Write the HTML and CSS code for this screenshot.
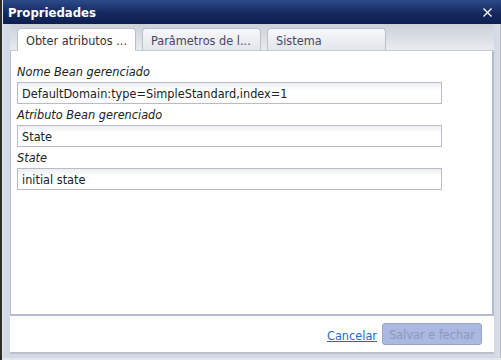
FILE: index.html
```html
<!DOCTYPE html>
<html lang="pt">
<head>
  <meta charset="UTF-8" />
  <title>Propriedades</title>
  <link rel="stylesheet" href="styles.css">
</head>
<body>
  <div class="screen">
    <div class="dialog">

      <!-- Title bar -->
      <div class="titlebar">
        <span class="title">Propriedades</span>
        <svg class="close" width="9" height="9" viewBox="0 0 9 9">
          <path d="M0.5 0.5 L8.5 8.5 M8.5 0.5 L0.5 8.5" stroke="#fff" stroke-width="1.3" fill="none"/>
        </svg>
      </div>

      <div class="frame">
        <div class="window">

          <!-- Tabs -->
          <div class="tabbar">
            <div class="tab active">Obter atributos ...</div>
            <div class="tab">Parâmetros de l...</div>
            <div class="tab">Sistema</div>
          </div>

          <!-- Tab content -->
          <div class="panel">
            <div class="field-label">Nome Bean gerenciado</div>
            <div class="field">DefaultDomain:type=SimpleStandard,index=1</div>
            <div class="field-label">Atributo Bean gerenciado</div>
            <div class="field">State</div>
            <div class="field-label">State</div>
            <div class="field">initial state</div>
          </div>

          <!-- Buttons -->
          <div class="footer">
            <a href="#" class="cancel">Cancelar</a>
            <button class="save" disabled>Salvar e fechar</button>
          </div>

        </div>
      </div>
    </div>
  </div>
</body>
</html>
```

FILE: styles.css
```css
body {
  margin: 0;
  padding: 0;
  background-color: #eceef1;
  font-family: "DejaVu Sans Condensed", "DejaVu Sans", Verdana, sans-serif;
  font-size: 12.6px;
  color: #222;
}
.screen {
  width: 499px;
  height: 360px;
  border-left: 2px solid #2c2c2c;
  background-color: #e3e6ea;
  overflow: hidden;
}
.dialog {
  margin-left: 1px;
  width: 498px;
}
.titlebar {
  height: 24px;
  display: flex;
  align-items: center;
  justify-content: space-between;
  padding: 0 9px 0 5px;
  background: linear-gradient(#2c4a8a, #14295e 55%, #0d1f52);
}
.title {
  color: #fff;
  font-weight: bold;
  font-size: 13px;
  margin-top: 1px;
}
.close {
  display: block;
}
.frame {
  width: 484px;
  padding: 0 3px 4px 7px;
  background-color: #d3dae5;
  border-right: 3px solid #d9dee6;
  box-shadow: 1px 0 0 #b3b9c3;
}
.window {
  background-color: #fff;
  border-bottom: 2px solid #bcc2cb;
}
.tabbar {
  height: 27px;
  display: flex;
  align-items: flex-end;
  gap: 6px;
  padding-left: 7px;
  background: linear-gradient(#cbd0d9, #e9ebef);
  border-bottom: 1px solid #c4cad6;
  box-sizing: border-box;
}
.tab {
  width: 119px;
  height: 22px;
  box-sizing: border-box;
  padding: 4px 0 0 8px;
  border: 1px solid #b9bfcb;
  border-bottom: none;
  border-radius: 4px 4px 0 0;
  background: linear-gradient(#f7f8fa, #e3e6ec);
  color: #4a4660;
  white-space: nowrap;
  overflow: hidden;
}
.tab.active {
  height: 23px;
  margin-bottom: -1px;
  background: #fff;
  color: #333;
}
.panel {
  height: 253px;
  padding: 10px 0 0 6px;
  border-left: 1px solid #b5bdca;
  border-right: 2px solid #b5bdca;
  border-bottom: 2px solid #b5bdca;
}
.field-label {
  height: 21px;
  line-height: 21px;
  font-style: italic;
  color: #222;
}
.field {
  width: 419px;
  height: 18px;
  padding: 2px 0 0 4px;
  line-height: 18px;
  border: 1px solid #b7bbcd;
  background: linear-gradient(#eceef1, #fff 7px);
  color: #222;
}
.footer {
  height: 36px;
  display: flex;
  justify-content: flex-end;
  align-items: flex-start;
  gap: 5px;
  padding: 7px 12px 0 0;
  box-sizing: border-box;
}
.cancel {
  color: #1b6cc2;
  text-decoration: underline;
  margin-top: 5px;
}
.save {
  width: 100px;
  height: 22px;
  padding: 0;
  border: 1px solid #98a3c6;
  border-radius: 3px;
  background-color: #a9b9e2;
  color: #8f98b6;
  font-family: inherit;
  font-size: 12.6px;
}
```
